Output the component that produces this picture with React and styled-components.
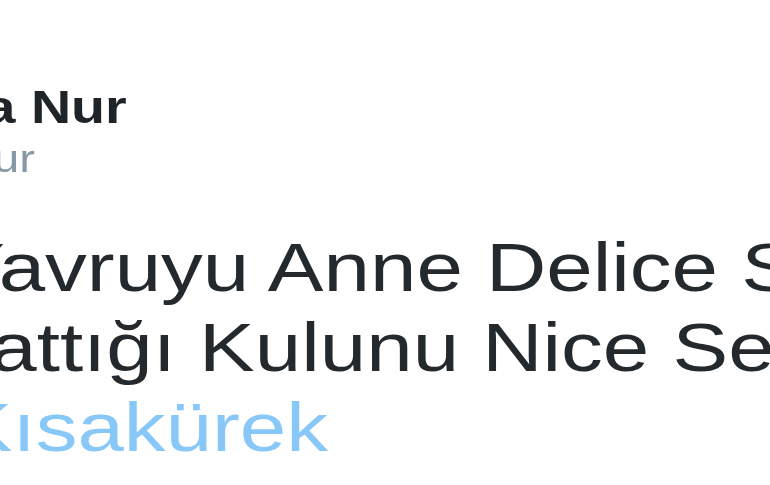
import React from 'react';
import styled, { createGlobalStyle } from 'styled-components';

const GlobalStyle = createGlobalStyle`
  html, body {
    margin: 0;
    padding: 0;
    background: #ffffff;
    overflow: hidden;
  }
  body {
    font-family: "Liberation Sans", Arial, sans-serif;
  }
`

// the tweet is cropped on both sides, so each line is nudged left by its hidden part
const App = () => (
  <Frame>
    <GlobalStyle />
    <Sheet>
      <Author>
        <Name $shift={-110}>Esma Nur</Name>
        <Handle $shift={-162.5}>@esmanur</Handle>
      </Author>
      <Body>
        <Line $shift={-42}>Yavruyu Anne Delice Sever,</Line>
        <Line $shift={-110.3}>Yarattığı Kulunu Nice Sever</Line>
        <Line $shift={-400} $link>#NecipFazılKısakürek</Line>
      </Body>
    </Sheet>
  </Frame>
)

export default App

const Frame = styled.div`
  width: 770px;
  height: 485px;
  overflow: hidden;
  background: #ffffff;
  filter: blur(0.45px);
`

const Sheet = styled.div`
  width: 770px;
  padding-top: 84px;
  transform: scaleX(1.21);
  transform-origin: left top;
  display: flex;
  flex-direction: column;
  gap: 50px;
`

const Author = styled.div`
  display: flex;
  flex-direction: column;
  gap: 9px;
`

const Name = styled.div`
  margin-left: ${p => p.$shift}px;
  font-size: 46px;
  line-height: 46px;
  font-weight: 700;
  color: #1f2428;
  white-space: nowrap;
`

const Handle = styled.div`
  margin-left: ${p => p.$shift}px;
  font-size: 39px;
  line-height: 39px;
  color: #8899a6;
  white-space: nowrap;
`

const Body = styled.div`
  display: flex;
  flex-direction: column;
`

const Line = styled.div`
  margin-left: ${p => p.$shift}px;
  font-size: 69px;
  line-height: 80px;
  color: ${p => (p.$link ? '#88c8f8' : '#24292e')};
  white-space: nowrap;
`
